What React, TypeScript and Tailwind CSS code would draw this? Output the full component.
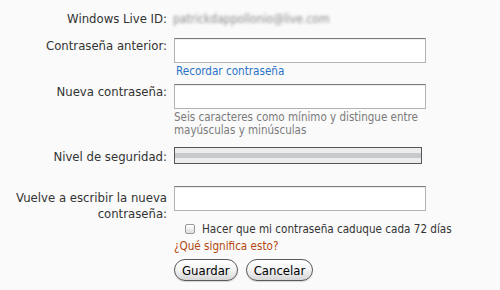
import React from "react";

const font = "font-['DejaVu_Sans_Condensed','DejaVu_Sans',sans-serif]";

function Field({ className = "" }: { className?: string }) {
  return (
    <input
      type="password"
      className={`block w-[252px] h-[25px] bg-white border border-[#b3b3b3] border-t-[#7a7a7a] shadow-[inset_0_1px_1px_rgba(0,0,0,0.08)] outline-none ${className}`}
    />
  );
}

function Label({
  children,
  className = "",
}: {
  children: React.ReactNode;
  className?: string;
}) {
  return (
    <div
      className={`w-[167px] shrink-0 text-right text-[13px] leading-4 ${className}`}
    >
      {children}
    </div>
  );
}

function PillButton({ children }: { children: React.ReactNode }) {
  return (
    <button
      type="button"
      className="h-[22px] px-[7px] rounded-full border border-[#5a5a5a] bg-gradient-to-b from-white via-[#f3f3f3] to-[#d6d6d6] text-[13px] leading-none text-black shadow-[0_1px_1px_rgba(0,0,0,0.15)]"
    >
      {children}
    </button>
  );
}

export default function App() {
  return (
    <div
      className={`w-[500px] h-[290px] bg-[#fafafa] ${font} text-[11.6px] text-[#333] pt-[11px]`}
    >
      {/* Windows Live ID */}
      <div className="flex">
        <Label>Windows Live ID:</Label>
        <div className="ml-[6px] leading-4 text-[12px] text-[#8a8a8a] blur-[1.4px]">
          patrickdappollonio@live.com
        </div>
      </div>

      {/* Contraseña anterior */}
      <div className="flex items-start mt-[11px]">
        <Label>Contraseña anterior:</Label>
        <div className="ml-[7px]">
          <Field />
          <a className="block mt-[1px] ml-[2px] leading-[14px] text-[#2a72c8] cursor-pointer">
            Recordar contraseña
          </a>
        </div>
      </div>

      {/* Nueva contraseña */}
      <div className="flex items-start mt-[6px]">
        <Label>Nueva contraseña:</Label>
        <div className="ml-[7px]">
          <Field />
          <p className="mt-[2px] w-[256px] text-[11.5px] leading-[13px] text-[#7a7a7a]">
            Seis caracteres como mínimo y distingue entre mayúsculas y
            minúsculas
          </p>
        </div>
      </div>

      {/* Nivel de seguridad */}
      <div className="flex items-start mt-[10px]">
        <Label className="pt-[2px]">Nivel de seguridad:</Label>
        <div className="ml-[7px] w-[248px] h-[17px] border border-[#555] flex flex-col">
          <div className="h-[5px] bg-[#ececec]" />
          <div className="h-[5px] bg-[#c7cacc]" />
          <div className="flex-1 bg-[#ececec]" />
        </div>
      </div>

      {/* Vuelve a escribir */}
      <div className="flex items-start mt-[21px]">
        <Label className="pt-[4px]">
          Vuelve a escribir la nueva
          <br />
          contraseña:
        </Label>
        <div className="ml-[7px]">
          <Field />
          <label className="flex items-center mt-[10px] ml-[11px] leading-4">
            <span className="w-[10px] h-[10px] rounded-[2px] border border-[#9a9a9a] bg-gradient-to-b from-white to-[#dcdcdc]" />
            <span className="ml-[7px]">
              Hacer que mi contraseña caduque cada 72 días
            </span>
          </label>
          <a className="block mt-[2px] leading-[14px] text-[#b4470f] cursor-pointer">
            ¿Qué significa esto?
          </a>
          <div className="flex gap-[8px] mt-[6px]">
            <PillButton>Guardar</PillButton>
            <PillButton>Cancelar</PillButton>
          </div>
        </div>
      </div>
    </div>
  );
}
